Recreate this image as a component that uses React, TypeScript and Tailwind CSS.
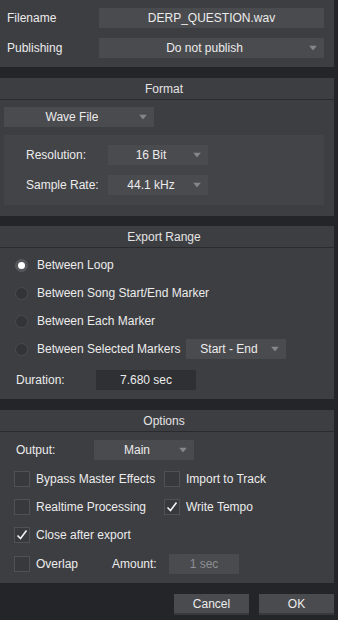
import React from "react";

function Arrow() {
  return (
    <svg width="8" height="5" viewBox="0 0 8 5" className="absolute right-[7px] top-1/2 -translate-y-1/2">
      <path d="M0 0 L8 0 L4 5 Z" fill="#85868a" />
    </svg>
  );
}

function Dropdown({ value, className }: { value: string; className: string }) {
  return (
    <div className={`relative flex h-5 items-center justify-center bg-[#4a4b4f] pr-[14px] ${className}`}>
      <span>{value}</span>
      <Arrow />
    </div>
  );
}

function Header({ title }: { title: string }) {
  return (
    <div className="flex h-[22px] items-center justify-center border-b border-[#2a2b2e] pr-[6px] text-[#e4e4e4]">
      {title}
    </div>
  );
}

function Radio({ label, checked, children }: { label: string; checked?: boolean; children?: React.ReactNode }) {
  return (
    <div className="flex h-5 items-center">
      <div
        className={`ml-[15px] flex h-[13px] w-[13px] items-center justify-center rounded-full border ${
          checked ? "border-[#5a5b5f] bg-[#55565a]" : "border-[#4a4b4f] bg-[#333438]"
        }`}
      >
        {checked ? <div className="h-[7px] w-[7px] rounded-full bg-white" /> : null}
      </div>
      <span className="ml-[9px] w-[149px] whitespace-nowrap">{label}</span>
      {children}
    </div>
  );
}

function Check({ label, checked }: { label: string; checked?: boolean }) {
  return (
    <div className="flex h-5 items-center">
      <div className="relative h-4 w-4 border border-[#505155] bg-[#38393d]">
        {checked ? (
          <svg width="14" height="14" viewBox="0 0 14 14" className="absolute left-0 top-0">
            <path d="M2.5 7.5 L5.5 10.5 L11.5 2.5" fill="none" stroke="#f2f2f2" strokeWidth="1.6" />
          </svg>
        ) : null}
      </div>
      <span className="ml-[6px]">{label}</span>
    </div>
  );
}

export default function App() {
  return (
    <div className="flex h-[620px] w-[338px] flex-col bg-[#242528] font-['Liberation_Sans',Arial,sans-serif] text-[12px] text-[#ececec]">
      {/* file */}
      <div className="flex h-[67px] w-[334px] flex-col gap-[10px] bg-[#3d3e42] pt-2">
        <div className="flex items-center">
          <span className="w-[99px] pl-[7px]">Filename</span>
          <div className="flex h-5 w-[225px] items-center justify-center bg-[#4a4b4f]">DERP_QUESTION.wav</div>
        </div>
        <div className="flex items-center">
          <span className="w-[99px] pl-[7px]">Publishing</span>
          <Dropdown value="Do not publish" className="w-[225px]" />
        </div>
      </div>

      {/* format */}
      <div className="mt-[11px] flex h-[138px] w-[334px] flex-col bg-[#3d3e42]">
        <Header title="Format" />
        <Dropdown value="Wave File" className="ml-1 mt-[7px] w-[150px]" />
        <div className="ml-1 mt-2 flex h-[70px] w-[320px] flex-col gap-[10px] bg-[#434448] pt-[10px]">
          <div className="flex items-center">
            <span className="w-[104px] pl-[22px]">Resolution:</span>
            <Dropdown value="16 Bit" className="w-[100px]" />
          </div>
          <div className="flex items-center">
            <span className="w-[104px] pl-[22px]">Sample Rate:</span>
            <Dropdown value="44.1 kHz" className="w-[100px]" />
          </div>
        </div>
      </div>

      {/* export range */}
      <div className="mt-[10px] flex h-[173px] w-[334px] flex-col bg-[#3d3e42]">
        <Header title="Export Range" />
        <div className="flex flex-col gap-2 pt-[7px]">
          <Radio label="Between Loop" checked />
          <Radio label="Between Song Start/End Marker" />
          <Radio label="Between Each Marker" />
          <Radio label="Between Selected Markers">
            <Dropdown value="Start - End" className="w-[100px]" />
          </Radio>
          <div className="mt-[3px] flex items-center">
            <span className="w-[96px] pl-4">Duration:</span>
            <div className="flex h-5 w-[100px] items-center justify-center bg-[#2f3033]">7.680 sec</div>
          </div>
        </div>
      </div>

      {/* options */}
      <div className="mt-[11px] flex h-[173px] w-[334px] flex-col bg-[#3d3e42]">
        <Header title="Options" />
        <div className="mt-2 flex items-center">
          <span className="w-[94px] pl-4">Output:</span>
          <Dropdown value="Main" className="w-[100px]" />
        </div>
        <div className="mt-[9px] flex flex-col gap-2 pl-[14px]">
          <div className="flex">
            <div className="w-[150px]"><Check label="Bypass Master Effects" /></div>
            <Check label="Import to Track" />
          </div>
          <div className="flex">
            <div className="w-[150px]"><Check label="Realtime Processing" /></div>
            <Check label="Write Tempo" checked />
          </div>
          <Check label="Close after export" checked />
          <div className="mt-px flex items-center">
            <div className="w-[98px]"><Check label="Overlap" /></div>
            <span className="w-[57px]">Amount:</span>
            <div className="flex h-5 w-[70px] items-center justify-center bg-[#4a4b4f] text-[#8e8f93]">1 sec</div>
          </div>
        </div>
      </div>

      {/* footer */}
      <div className="mt-[11px] flex w-[334px] justify-end gap-[10px]">
        <button className="h-[21px] w-[75px] border-b-2 border-[#38393c] bg-[#4a4b4f] text-[#ececec]">Cancel</button>
        <button className="h-[21px] w-[75px] border-b-2 border-[#38393c] bg-[#4a4b4f] text-[#ececec]">OK</button>
      </div>
    </div>
  );
}
